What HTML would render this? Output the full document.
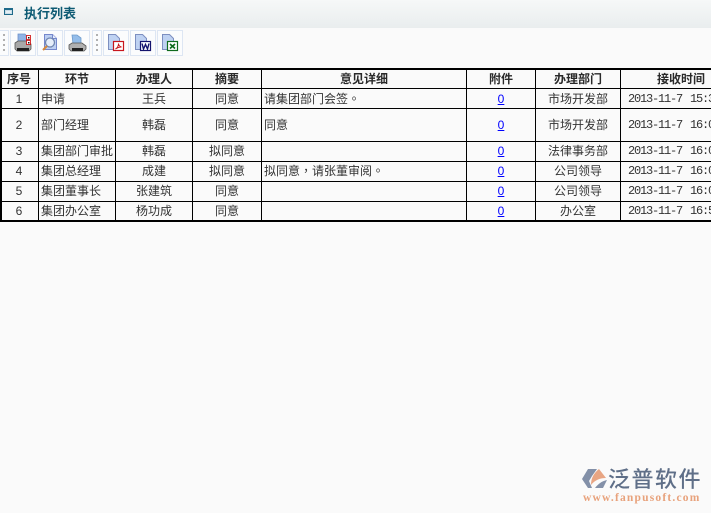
<!DOCTYPE html>
<html><head><meta charset="utf-8">
<style>
html,body{margin:0;padding:0;width:711px;height:513px;overflow:hidden;background:#fafafa;}
body{position:relative;font-family:"WenQuanYi Zen Hei","Noto Sans CJK SC",sans-serif;font-size:12px;color:#333;}
.hd{position:absolute;left:0;top:0;width:711px;height:28px;background:linear-gradient(#f6f8f8,#e9edee);}
.title{position:absolute;left:24px;top:4px;font-size:13px;font-weight:bold;color:#0d5a73;line-height:17px;}
.btn{position:absolute;top:30px;width:26px;height:26px;border:1px solid #dde6f3;background:#fbfcfd;box-sizing:border-box;}
.grip{position:absolute;top:30px;height:26px;border:1px solid #dde6f3;box-sizing:border-box;background:#fbfcfd;}
.btn svg{position:absolute;left:-1px;top:-1px}
.l{position:absolute;background:#000;}
.c{position:absolute;text-align:center;white-space:nowrap;line-height:20px;color:#333;}
.th{font-weight:bold;color:#2a2a2a;}
.le{text-align:left;padding-left:2px;}
.m{font-family:"Liberation Mono",monospace;font-size:12px;letter-spacing:-1.2px;word-spacing:2px;line-height:21px;}
.n{font-family:"Liberation Sans",sans-serif;font-size:12px;line-height:21px;}
a{color:#00f;text-decoration:underline;}
.logo{position:absolute;left:581px;top:466px;}
.lt{position:absolute;left:608px;top:464px;font-size:22px;line-height:28px;color:#5f6f88;letter-spacing:1.5px;font-family:"Noto Sans CJK SC",sans-serif;font-weight:500;white-space:nowrap;}
.lu{position:absolute;left:583px;top:491px;font-family:"Liberation Serif",serif;font-size:11.5px;font-weight:bold;line-height:14px;color:#e8a27c;letter-spacing:1.2px;white-space:nowrap;}
.p{font-family:"Noto Sans CJK TC",sans-serif;}
</style></head><body>
<div class="hd"></div>
<svg style="position:absolute;left:4px;top:8px" width="10" height="8"><rect x=".5" y=".5" width="8" height="6" fill="#c9dde8" stroke="#1f6a8a"/><rect x="1" y="1" width="7" height="1" fill="#1f6a8a"/><rect x="2" y="3" width="5" height="2" fill="#e6f0f5"/></svg>
<div class="title">执行列表</div>

<div class="grip" style="left:0;width:9px;border-left:0"></div>
<svg style="position:absolute;left:3px;top:34px" width="3" height="18"><g fill="#b0b0b0"><rect y="0" width="2" height="2"/><rect y="5" width="2" height="2"/><rect y="10" width="2" height="2"/><rect y="15" width="2" height="2"/></g></svg>

<div class="btn" style="left:10px"><svg width="26" height="26"><path d="M8 4h7l1.500 2v7H8z" fill="#8fb3e6" stroke="#6f90c8" stroke-width=".8"/><path d="M5 13l3-2h10l3 3v5l-2 2H7l-2-2z" fill="#a8a8a8" stroke="#555" stroke-width=".8"/><rect x="7" y="18" width="12" height="3" fill="#222"/><rect x="16.500" y="5.500" width="4" height="4" fill="#fff" stroke="#c00" stroke-width=".8"/><rect x="16.500" y="10.500" width="4" height="4" fill="#fff" stroke="#c00" stroke-width=".8"/><rect x="18" y="7" width="1.500" height="1.500" fill="#111"/><rect x="18" y="12" width="1.500" height="1.500" fill="#111"/></svg></div>
<div class="btn" style="left:37px"><svg width="26" height="26"><path d="M7.500 4.500h8l4 4v11h-12z" fill="#bccff2" stroke="#7587cc"/><path d="M15.500 4.500v4h4" fill="#e8eefa" stroke="#7587cc"/><circle cx="13" cy="12.500" r="4.500" fill="#e6eefa" stroke="#6f85b0" stroke-width="1.300"/><path d="M10 16L6 20" stroke="#d8893a" stroke-width="2"/></svg></div>
<div class="btn" style="left:64px"><svg width="26" height="26"><path d="M8 5h5l4 3v6H9z" fill="#94bdea" stroke="#6f9ccc" stroke-width=".8"/><path d="M5 15l3-2h10l4 3v3l-2 2H7l-2-2z" fill="#b0b0b0" stroke="#555" stroke-width=".8"/><rect x="8" y="18" width="11" height="3" fill="#222"/></svg></div>

<div class="grip" style="left:92px;width:10px"></div>
<svg style="position:absolute;left:96px;top:34px" width="3" height="18"><g fill="#b0b0b0"><rect y="0" width="2" height="2"/><rect y="5" width="2" height="2"/><rect y="10" width="2" height="2"/><rect y="15" width="2" height="2"/></g></svg>

<div class="btn" style="left:103px"><svg width="26" height="26"><path d="M5.500 4.500h7l4 4v11h-11z" fill="#bfd2f2" stroke="#7d8fc0"/><rect x="10.500" y="11.500" width="10" height="9" fill="#fff" stroke="#c8161d" stroke-width="1.200"/><path d="M12.500 19c2-1 3-3.500 3-5.500 0 2 1 3 3 3.500-2 0-4 .5-6 2z" fill="none" stroke="#c8161d"/></svg></div>
<div class="btn" style="left:130px"><svg width="26" height="26"><path d="M5.500 4.500h7l4 4v11h-11z" fill="#bfd2f2" stroke="#7d8fc0"/><rect x="10.500" y="11.500" width="10" height="9" fill="#fff" stroke="#14146e" stroke-width="1.200"/><path d="M12 13.500l1.500 5.500 2-4.500 2 4.500 1.500-5.500" fill="none" stroke="#14146e" stroke-width="1.400"/></svg></div>
<div class="btn" style="left:157px"><svg width="26" height="26"><path d="M5.500 4.500h7l4 4v11h-11z" fill="#bfd2f2" stroke="#7d8fc0"/><rect x="10.500" y="11.500" width="10" height="9" fill="#fff" stroke="#0f6b1e" stroke-width="1.200"/><path d="M13 14l5 4.500M18 14l-5 4.500" stroke="#0f6b1e" stroke-width="1.700"/></svg></div>

<!-- grid -->
<div class="l" style="left:0;top:68px;width:711px;height:2px"></div>
<div class="l" style="left:0;top:88px;width:711px;height:1px"></div>
<div class="l" style="left:0;top:108px;width:711px;height:1px"></div>
<div class="l" style="left:0;top:141px;width:711px;height:1px"></div>
<div class="l" style="left:0;top:161px;width:711px;height:1px"></div>
<div class="l" style="left:0;top:181px;width:711px;height:1px"></div>
<div class="l" style="left:0;top:201px;width:711px;height:1px"></div>
<div class="l" style="left:0;top:220px;width:711px;height:2px"></div>
<div class="l" style="left:0;top:68px;width:2px;height:154px"></div>
<div class="l" style="left:38px;top:68px;width:1px;height:154px"></div>
<div class="l" style="left:115px;top:68px;width:1px;height:154px"></div>
<div class="l" style="left:192px;top:68px;width:1px;height:154px"></div>
<div class="l" style="left:261px;top:68px;width:1px;height:154px"></div>
<div class="l" style="left:466px;top:68px;width:1px;height:154px"></div>
<div class="l" style="left:535px;top:68px;width:1px;height:154px"></div>
<div class="l" style="left:620px;top:68px;width:1px;height:154px"></div>

<!-- header -->
<div class="c th" style="left:0;width:38px;top:69px">序号</div>
<div class="c th" style="left:39px;width:76px;top:69px">环节</div>
<div class="c th" style="left:116px;width:76px;top:69px">办理人</div>
<div class="c th" style="left:193px;width:68px;top:69px">摘要</div>
<div class="c th" style="left:262px;width:204px;top:69px">意见详细</div>
<div class="c th" style="left:467px;width:68px;top:69px">附件</div>
<div class="c th" style="left:536px;width:84px;top:69px">办理部门</div>
<div class="c th" style="left:621px;width:120px;top:69px;">接收时间</div>

<!-- row 1 -->
<div class="c n" style="left:0;width:38px;top:89px">1</div>
<div class="c le" style="left:39px;top:89px">申请</div>
<div class="c" style="left:116px;width:76px;top:89px">王兵</div>
<div class="c" style="left:193px;width:68px;top:89px">同意</div>
<div class="c le" style="left:262px;top:89px">请集团部门会签<span class="p">。</span></div>
<div class="c n" style="left:467px;width:68px;top:89px"><a>0</a></div>
<div class="c" style="left:536px;width:84px;top:89px">市场开发部</div>
<div class="c m" style="left:628px;top:89px">2013-11-7 15:30</div>
<!-- row 2 -->
<div class="c n" style="left:0;width:38px;top:115px">2</div>
<div class="c le" style="left:39px;top:115px">部门经理</div>
<div class="c" style="left:116px;width:76px;top:115px">韩磊</div>
<div class="c" style="left:193px;width:68px;top:115px">同意</div>
<div class="c le" style="left:262px;top:115px">同意</div>
<div class="c n" style="left:467px;width:68px;top:115px"><a>0</a></div>
<div class="c" style="left:536px;width:84px;top:115px">市场开发部</div>
<div class="c m" style="left:628px;top:115px">2013-11-7 16:00</div>
<!-- row 3 -->
<div class="c n" style="left:0;width:38px;top:141px">3</div>
<div class="c le" style="left:39px;top:141px">集团部门审批</div>
<div class="c" style="left:116px;width:76px;top:141px">韩磊</div>
<div class="c" style="left:193px;width:68px;top:141px">拟同意</div>
<div class="c n" style="left:467px;width:68px;top:141px"><a>0</a></div>
<div class="c" style="left:536px;width:84px;top:141px">法律事务部</div>
<div class="c m" style="left:628px;top:141px">2013-11-7 16:00</div>
<!-- row 4 -->
<div class="c n" style="left:0;width:38px;top:161px">4</div>
<div class="c le" style="left:39px;top:161px">集团总经理</div>
<div class="c" style="left:116px;width:76px;top:161px">成建</div>
<div class="c" style="left:193px;width:68px;top:161px">拟同意</div>
<div class="c le" style="left:262px;top:161px">拟同意<span class="p">，</span>请张董审阅<span class="p">。</span></div>
<div class="c n" style="left:467px;width:68px;top:161px"><a>0</a></div>
<div class="c" style="left:536px;width:84px;top:161px">公司领导</div>
<div class="c m" style="left:628px;top:161px">2013-11-7 16:00</div>
<!-- row 5 -->
<div class="c n" style="left:0;width:38px;top:181px">5</div>
<div class="c le" style="left:39px;top:181px">集团董事长</div>
<div class="c" style="left:116px;width:76px;top:181px">张建筑</div>
<div class="c" style="left:193px;width:68px;top:181px">同意</div>
<div class="c n" style="left:467px;width:68px;top:181px"><a>0</a></div>
<div class="c" style="left:536px;width:84px;top:181px">公司领导</div>
<div class="c m" style="left:628px;top:181px">2013-11-7 16:00</div>
<!-- row 6 -->
<div class="c n" style="left:0;width:38px;top:201px">6</div>
<div class="c le" style="left:39px;top:201px">集团办公室</div>
<div class="c" style="left:116px;width:76px;top:201px">杨功成</div>
<div class="c" style="left:193px;width:68px;top:201px">同意</div>
<div class="c n" style="left:467px;width:68px;top:201px"><a>0</a></div>
<div class="c" style="left:536px;width:84px;top:201px">办公室</div>
<div class="c m" style="left:628px;top:201px">2013-11-7 16:50</div>

<!-- logo -->
<svg class="logo" width="28" height="26"><path d="M7 3h9l-5 7-3 5 3 7H7L1 13z" fill="#8390a8"/><path d="M10 19C10 12 13 7 18 3l7 9c-6 0-11 2-15 7z" fill="#e8a583"/><path d="M14 22c3-4 7-7 12-8l-4 8z" fill="#8390a8"/></svg>
<div class="lt">泛普软件</div>
<div class="lu">www.fanpusoft.com</div>
</body></html>
